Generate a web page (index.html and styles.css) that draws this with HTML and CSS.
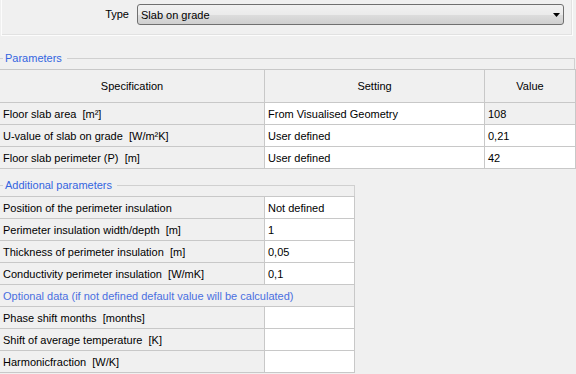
FILE: index.html
```html
<!DOCTYPE html>
<html>
<head>
    <title>Slab on grade</title>
    <link rel="stylesheet" href="styles.css">
</head>
<body>
    <div class="type-panel">
        <span class="type-label">Type</span>
        <div class="combo">
            <span>Slab on grade</span>
            <svg class="combo-arrow" width="7" height="4" viewBox="0 0 7 4"><path d="M0 0H7L3.5 4Z" fill="#000"/></svg>
        </div>
    </div>

    <section class="group group-main">
        <div class="group-head"><span class="group-label">Parameters</span></div>
        <div class="grid grid-main">
            <div class="cell head">Specification</div>
            <div class="cell head">Setting</div>
            <div class="cell head">Value</div>

            <div class="cell">Floor slab area  [m²]</div>
            <div class="cell edit">From Visualised Geometry</div>
            <div class="cell">108</div>

            <div class="cell">U-value of slab on grade  [W/m²K]</div>
            <div class="cell edit">User defined</div>
            <div class="cell edit">0,21</div>

            <div class="cell">Floor slab perimeter (P)  [m]</div>
            <div class="cell edit">User defined</div>
            <div class="cell edit">42</div>
        </div>
    </section>

    <section class="group group-extra">
        <div class="group-head"><span class="group-label">Additional parameters</span></div>
        <div class="grid grid-extra">
            <div class="cell">Position of the perimeter insulation</div>
            <div class="cell edit">Not defined</div>

            <div class="cell">Perimeter insulation width/depth  [m]</div>
            <div class="cell edit">1</div>

            <div class="cell">Thickness of perimeter insulation  [m]</div>
            <div class="cell edit">0,05</div>

            <div class="cell">Conductivity perimeter insulation  [W/mK]</div>
            <div class="cell edit">0,1</div>

            <div class="cell note">Optional data (if not defined default value will be calculated)</div>

            <div class="cell">Phase shift months  [months]</div>
            <div class="cell edit"></div>

            <div class="cell">Shift of average temperature  [K]</div>
            <div class="cell edit"></div>

            <div class="cell">Harmonicfraction  [W/K]</div>
            <div class="cell edit"></div>
        </div>
    </section>
</body>
</html>
```

FILE: styles.css
```css
body { margin: 0; background: #f0f0f0; font-family: 'Liberation Sans', Arial, sans-serif; font-size: 11px; color: #000; overflow: hidden; }

.type-panel {
    display: grid;
    grid-template-columns: 127px 427px;
    column-gap: 8px;
    align-items: start;
    width: 572px;
    height: 36px;
    margin-left: 1px;
    padding-top: 4px;
    box-sizing: border-box;
    border: 1px solid #fcfcfc;
    border-top: none;
    box-shadow: inset -1px -1px 0 #e2e2e2;
}
.type-label { text-align: right; line-height: 21px; }
.combo {
    display: flex;
    align-items: center;
    justify-content: space-between;
    height: 21px;
    padding: 0 3px;
    box-sizing: border-box;
    border: 1px solid #707070;
    border-radius: 3px;
    background: linear-gradient(#f2f2f2 0%, #ebebeb 50%, #dddddd 51%, #cfcfcf 100%);
}
.combo-arrow { margin-top: 1px; }

.group-main { margin-top: 16px; }
.group-extra { margin-top: 10px; }
.group-head { display: flex; height: 17px; }
.group-head::before { content: ""; width: 3px; margin-top: 6px; border-top: 1px solid #d0d0d0; }
.group-head::after { content: ""; flex: 1; margin-top: 6px; border-top: 1px solid #d0d0d0; border-right: 1px solid #d0d0d0; }
.group-main .group-head { width: 575px; }
.group-extra .group-head { width: 355px; }
.group-label { padding: 0 5px 0 2px; line-height: 13px; color: #3465e0; }

.grid {
    display: grid;
    gap: 1px;
    margin-left: -1px;
    border: 1px solid #c8c8c8;
    background: #c8c8c8;
}
.grid-main { width: 575px; grid-template-columns: 264px 219px 90px; grid-template-rows: 32px repeat(3, 21px); }
.grid-extra { width: 354px; grid-template-columns: 264px 89px; grid-auto-rows: 21px; }

.cell {
    display: flex;
    align-items: center;
    padding: 0 3px;
    background: #f0f0f0;
    white-space: pre;
    overflow: hidden;
}
.cell.head { justify-content: center; }
.cell.edit { background: #fff; }
.cell.note { grid-column: 1 / -1; color: #4a6fe0; }
```
